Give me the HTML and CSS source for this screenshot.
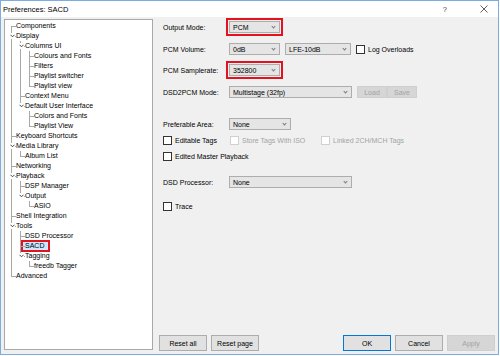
FILE: index.html
```html
<!DOCTYPE html>
<html lang="en">
<head>
  <meta charset="UTF-8" />
  <title>Preferences: SACD</title>
  <link rel="stylesheet" href="styles.css">
</head>
<body>
  <div class="window">
    <div class="titlebar">
      <span class="title">Preferences: SACD</span>
      <span class="help">?</span>
      <svg class="close" width="8" height="8" viewBox="0 0 8 8"><path d="M0.5 0.5 L7.5 7.5 M7.5 0.5 L0.5 7.5" stroke="#333" stroke-width="0.8" fill="none"/></svg>
    </div>

    <div class="body">
      <!-- page tree -->
      <div class="tree">
        <ul>
          <li><div class="row">Components</div></li>
          <li><div class="row"><span class="tog"><svg width="5" height="4"><path d="M0.5 0.8 L2.5 2.8 L4.5 0.8" stroke="#444" fill="none"/></svg></span>Display</div>
            <ul>
              <li><div class="row"><span class="tog"><svg width="5" height="4"><path d="M0.5 0.8 L2.5 2.8 L4.5 0.8" stroke="#444" fill="none"/></svg></span>Columns UI</div>
                <ul>
                  <li><div class="row">Colours and Fonts</div></li>
                  <li><div class="row">Filters</div></li>
                  <li><div class="row">Playlist switcher</div></li>
                  <li><div class="row">Playlist view</div></li>
                </ul>
              </li>
              <li><div class="row">Context Menu</div></li>
              <li><div class="row"><span class="tog"><svg width="5" height="4"><path d="M0.5 0.8 L2.5 2.8 L4.5 0.8" stroke="#444" fill="none"/></svg></span>Default User Interface</div>
                <ul>
                  <li><div class="row">Colors and Fonts</div></li>
                  <li><div class="row">Playlist View</div></li>
                </ul>
              </li>
            </ul>
          </li>
          <li><div class="row">Keyboard Shortcuts</div></li>
          <li><div class="row"><span class="tog"><svg width="5" height="4"><path d="M0.5 0.8 L2.5 2.8 L4.5 0.8" stroke="#444" fill="none"/></svg></span>Media Library</div>
            <ul>
              <li><div class="row">Album List</div></li>
            </ul>
          </li>
          <li><div class="row">Networking</div></li>
          <li><div class="row"><span class="tog"><svg width="5" height="4"><path d="M0.5 0.8 L2.5 2.8 L4.5 0.8" stroke="#444" fill="none"/></svg></span>Playback</div>
            <ul>
              <li><div class="row">DSP Manager</div></li>
              <li><div class="row"><span class="tog"><svg width="5" height="4"><path d="M0.5 0.8 L2.5 2.8 L4.5 0.8" stroke="#444" fill="none"/></svg></span>Output</div>
                <ul>
                  <li><div class="row">ASIO</div></li>
                </ul>
              </li>
            </ul>
          </li>
          <li><div class="row">Shell Integration</div></li>
          <li><div class="row"><span class="tog"><svg width="5" height="4"><path d="M0.5 0.8 L2.5 2.8 L4.5 0.8" stroke="#444" fill="none"/></svg></span>Tools</div>
            <ul>
              <li><div class="row">DSD Processor</div></li>
              <li><div class="row"><span class="sel">SACD</span></div></li>
              <li><div class="row"><span class="tog"><svg width="5" height="4"><path d="M0.5 0.8 L2.5 2.8 L4.5 0.8" stroke="#444" fill="none"/></svg></span>Tagging</div>
                <ul>
                  <li><div class="row">freedb Tagger</div></li>
                </ul>
              </li>
            </ul>
          </li>
          <li><div class="row">Advanced</div></li>
        </ul>
      </div>

      <!-- SACD page -->
      <div class="pane">
        <div class="form">
          <div class="line r1">
            <span class="lbl">Output Mode:</span>
            <span class="mark"><span class="combo w51">PCM<i class="chev"></i></span></span>
          </div>
          <div class="line r2">
            <span class="lbl">PCM Volume:</span>
            <span class="combo w51">0dB<i class="chev"></i></span>
            <span class="combo w66 ml5">LFE-10dB<i class="chev"></i></span>
            <span class="check ml5"><i class="box"></i>Log Overloads</span>
          </div>
          <div class="line r3">
            <span class="lbl">PCM Samplerate:</span>
            <span class="mark"><span class="combo w51">352800<i class="chev"></i></span></span>
          </div>
          <div class="line r4">
            <span class="lbl">DSD2PCM Mode:</span>
            <span class="combo w123">Multistage (32fp)<i class="chev"></i></span>
            <span class="btn off small ml5">Load</span>
            <span class="btn off small">Save</span>
          </div>
          <div class="line r5">
            <span class="lbl">Preferable Area:</span>
            <span class="combo w62">None<i class="chev"></i></span>
          </div>
          <div class="line r6">
            <span class="check c1"><i class="box"></i>Editable Tags</span>
            <span class="check c2 off"><i class="box"></i>Store Tags With ISO</span>
            <span class="check off"><i class="box"></i>Linked 2CH/MCH Tags</span>
          </div>
          <div class="line r7">
            <span class="check"><i class="box"></i>Edited Master Playback</span>
          </div>
          <div class="line r8">
            <span class="lbl">DSD Processor:</span>
            <span class="combo w123">None<i class="chev"></i></span>
          </div>
          <div class="line r9">
            <span class="check"><i class="box"></i>Trace</span>
          </div>
        </div>

        <div class="actions">
          <span class="btn">Reset all</span>
          <span class="btn">Reset page</span>
          <span class="spacer"></span>
          <span class="btn default">OK</span>
          <span class="btn">Cancel</span>
          <span class="btn off">Apply</span>
        </div>
      </div>
    </div>
  </div>
</body>
</html>
```

FILE: styles.css
```css
* {
  box-sizing: border-box;
}
body {
  margin: 0;
  background: #fff;
  font-family: "Liberation Sans", Arial, sans-serif;
  font-size: 7px;
  color: #000;
}
.window {
  width: 499px;
  height: 355px;
  border: 1px solid #7aaee3;
  display: flex;
  flex-direction: column;
  background: #f0f0f0;
}

/* title bar */
.titlebar {
  height: 16px;
  background: #fff;
  display: flex;
  align-items: center;
  padding-left: 2px;
}
.title {
  font-size: 7.5px;
  color: #000;
  flex: 1;
}
.help {
  font-size: 7.5px;
  color: #444;
  margin-right: 33px;
}
.close {
  margin-right: 10px;
}

.body {
  flex: 1;
  display: flex;
}

/* tree */
.tree {
  width: 149px;
  height: 331px;
  margin: 2px 0 0 3px;
  background: #fff;
  border: 1px solid #a8a8a8;
  padding-top: 1px;
  overflow: hidden;
}
.tree ul {
  list-style: none;
  margin: 0;
  padding: 0 0 0 4px;
}
.tree > ul {
  padding-left: 6px;
}
.tree li {
  position: relative;
  padding-left: 5px;
}
.tree li::before {
  content: "";
  position: absolute;
  left: 0;
  top: 0;
  width: 4px;
  height: 5px;
  border-left: 1px solid #a8a8a8;
  border-bottom: 1px solid #a8a8a8;
}
.tree li:not(:last-child)::after {
  content: "";
  position: absolute;
  left: 0;
  top: 5px;
  bottom: 0;
  border-left: 1px solid #a8a8a8;
}
.tree > ul > li:first-child::before {
  top: 5px;
  height: 0;
}
.row {
  height: 10px;
  line-height: 10px;
  white-space: nowrap;
}
.tog {
  position: absolute;
  left: -2px;
  top: 2px;
  width: 6px;
  height: 6px;
  background: #fff;
  z-index: 1;
  display: flex;
  align-items: center;
  justify-content: center;
}
.tog svg {
  display: block;
}
.sel {
  display: inline-block;
  vertical-align: top;
  margin: -1px 0 0 -4px;
  line-height: 8px;
  padding: 0 4px 0 2px;
  border: 2px solid #e2131f;
  background: #cce8ff;
}

/* right page */
.pane {
  flex: 1;
  display: flex;
  flex-direction: column;
  padding: 0 3px 3px 6px;
}
.form {
  flex: 1;
  padding-left: 4px;
}
.line {
  height: 12px;
  display: flex;
  align-items: center;
}
.r1 { margin-top: 4px; }
.r2 { margin-top: 10px; }
.r3 { margin-top: 9px; }
.r4 { margin-top: 10px; }
.r5 { margin-top: 20px; }
.r6 { margin-top: 4px; }
.r7 { margin-top: 4px; }
.r8 { margin-top: 14px; }
.r9 { margin-top: 12px; }

.lbl {
  width: 66px;
  flex-shrink: 0;
  white-space: nowrap;
}
.mark {
  display: inline-flex;
  margin: -3px;
  padding: 1px;
  border: 2px solid #e2131f;
}
.combo {
  height: 12px;
  display: inline-flex;
  align-items: center;
  justify-content: space-between;
  border: 1px solid #adadad;
  background: #e5e5e5;
  padding: 0 4px 0 3px;
  white-space: nowrap;
}
.w51 { width: 51px; }
.w62 { width: 62px; }
.w66 { width: 66px; }
.w123 { width: 123px; }
.ml5 { margin-left: 5px; }
.chev {
  width: 3px;
  height: 3px;
  border-right: 1px solid #777;
  border-bottom: 1px solid #777;
  transform: rotate(45deg);
  margin-top: -2px;
}

.check {
  display: inline-flex;
  align-items: center;
  white-space: nowrap;
}
.box {
  width: 9px;
  height: 9px;
  border: 1px solid #333;
  background: #fff;
  margin-right: 3px;
}
.c1 { width: 67px; }
.c2 { width: 91px; }
.check.off {
  color: #a3a3a3;
}
.check.off .box {
  border-color: #d0d0d0;
}

.btn {
  display: inline-flex;
  align-items: center;
  justify-content: center;
  width: 48px;
  height: 16px;
  border: 1px solid #adadad;
  background: #e1e1e1;
  white-space: nowrap;
}
.btn.small {
  width: 30px;
  height: 12px;
}
.btn.off {
  color: #a3a3a3;
  background: #d6d6d6;
  border-color: #cfcfcf;
}
.btn.default {
  border-color: #0078d7;
}
.actions {
  display: flex;
  gap: 4px;
}
.spacer {
  flex: 1;
}
```
